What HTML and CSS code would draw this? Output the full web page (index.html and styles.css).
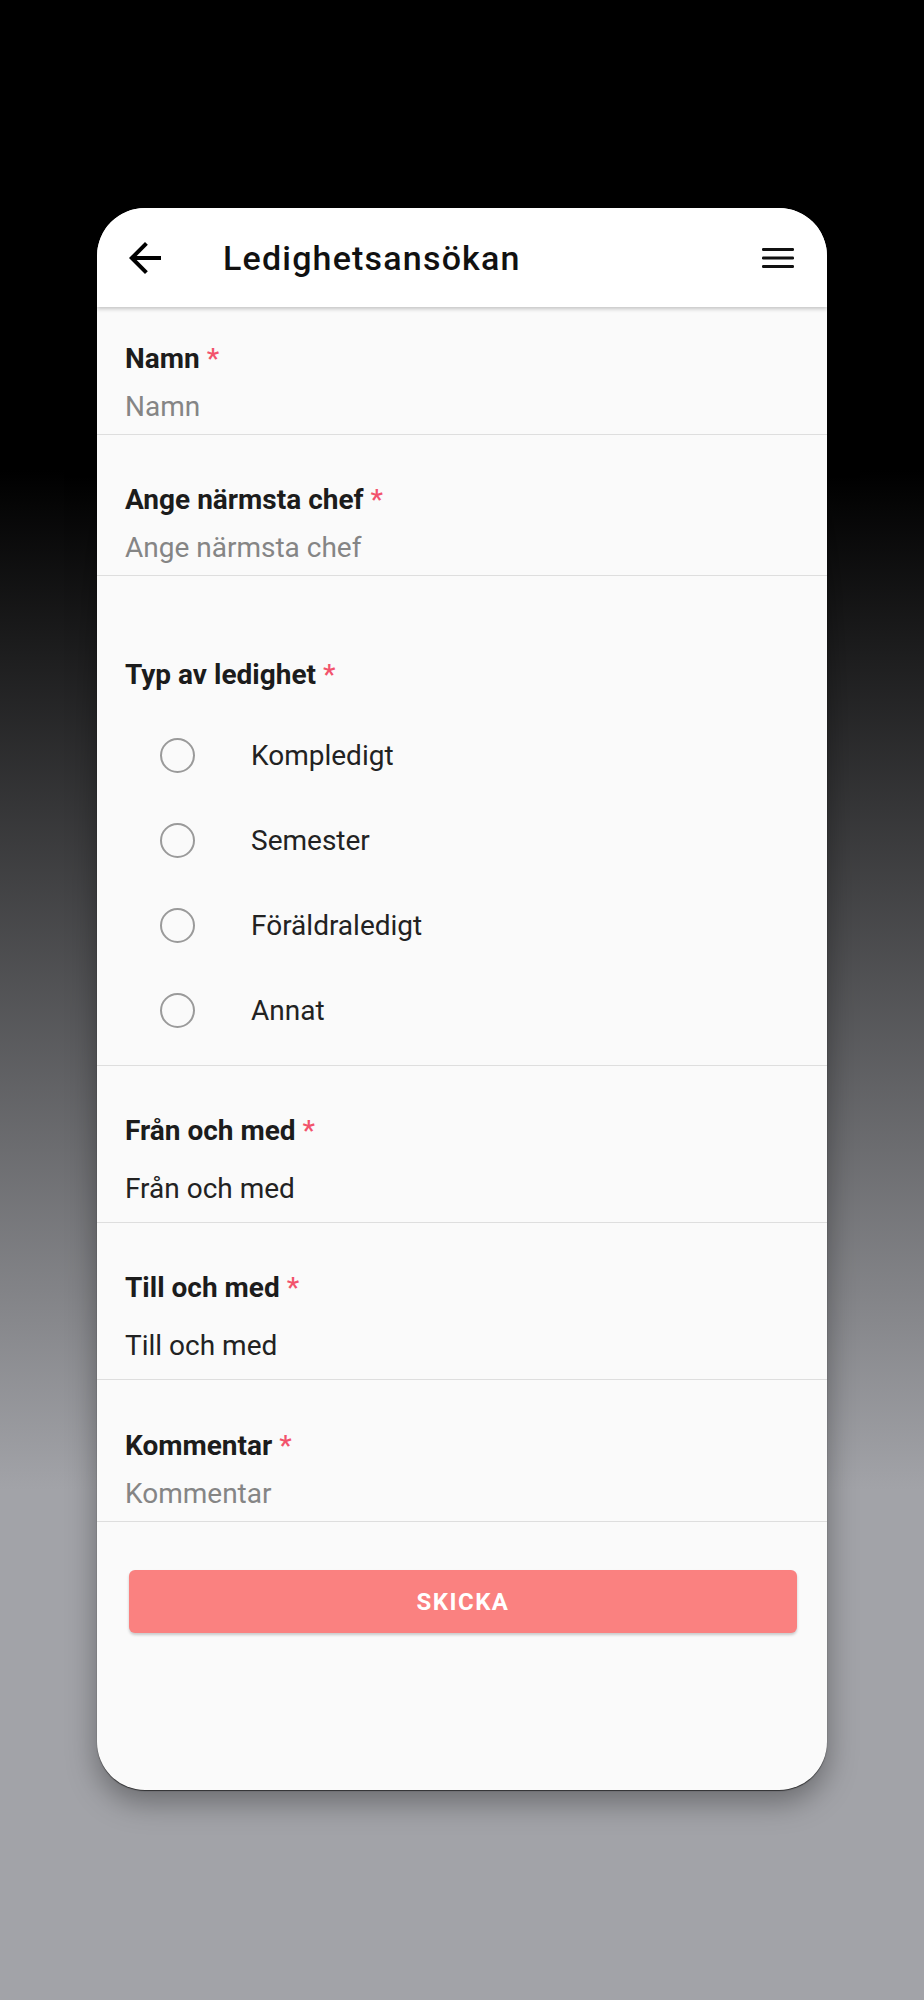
FILE: index.html
```html
<!DOCTYPE html>
<html lang="sv">
<head>
<meta charset="utf-8">
<title>Ledighetsansökan</title>
<link rel="stylesheet" href="styles.css">
</head>
<body>
<div class="stage">
  <div class="phone">
    <header class="appbar">
      <button class="icon-btn back" aria-label="Tillbaka">
        <svg width="48" height="48" viewBox="0 0 24 24"><path d="M20 11H7.83l5.59-5.59L12 4l-8 8 8 8 1.41-1.41L7.83 13H20v-2z" fill="#000"/></svg>
      </button>
      <h1 class="title">Ledighetsansökan</h1>
      <button class="icon-btn menu" aria-label="Meny">
        <svg width="32" height="24" viewBox="0 0 32 24"><rect x="0" y="2" width="32" height="3" rx="1.2" fill="#111"/><rect x="0" y="10.5" width="32" height="3" rx="1.2" fill="#111"/><rect x="0" y="19" width="32" height="3" rx="1.2" fill="#111"/></svg>
      </button>
    </header>
    <main class="form">
      <div class="field field-first">
        <div class="label">Namn <span class="req">*</span></div>
        <div class="input placeholder">Namn</div>
      </div>
      <div class="field">
        <div class="label">Ange närmsta chef <span class="req">*</span></div>
        <div class="input placeholder">Ange närmsta chef</div>
      </div>
      <div class="field field-radio">
        <div class="label">Typ av ledighet <span class="req">*</span></div>
        <div class="radios">
          <div class="radio"><span class="circle"></span><span class="radio-text">Kompledigt</span></div>
          <div class="radio"><span class="circle"></span><span class="radio-text">Semester</span></div>
          <div class="radio"><span class="circle"></span><span class="radio-text">Föräldraledigt</span></div>
          <div class="radio"><span class="circle"></span><span class="radio-text">Annat</span></div>
        </div>
      </div>
      <div class="field field-date">
        <div class="label">Från och med <span class="req">*</span></div>
        <div class="input value">Från och med</div>
      </div>
      <div class="field field-date">
        <div class="label">Till och med <span class="req">*</span></div>
        <div class="input value">Till och med</div>
      </div>
      <div class="field field-last">
        <div class="label">Kommentar <span class="req">*</span></div>
        <div class="input placeholder">Kommentar</div>
      </div>
      <div class="actions">
        <button class="submit">SKICKA</button>
      </div>
    </main>
  </div>
</div>
</body>
</html>
```
FILE: styles.css
```css
html, body {
  margin: 0;
  padding: 0;
}
body {
  min-height: 2000px;
  background: linear-gradient(to bottom, #000 0px, #000 470px, #a2a3a8 1490px, #a2a3a8 2000px);
  font-family: Roboto, "Liberation Sans", sans-serif;
}
.stage {
  display: flex;
  justify-content: center;
  padding-top: 208px;
}
.phone {
  width: 730px;
  height: 1582px;
  background: #fafafa;
  border-radius: 48px;
  overflow: hidden;
  display: flex;
  flex-direction: column;
  box-shadow: 0 1px 1px rgba(0,0,0,0.6), 0 12px 30px rgba(0,0,0,0.35);
}
.appbar {
  height: 99px;
  flex: none;
  background: #fff;
  display: flex;
  align-items: center;
  padding: 0 33px 0 24px;
  box-shadow: 0 2px 4px rgba(0,0,0,0.22);
  position: relative;
  z-index: 1;
}
.icon-btn {
  background: none;
  border: 0;
  padding: 0;
  margin: 0;
  display: flex;
  align-items: center;
  justify-content: center;
}
.back {
  width: 48px;
  height: 48px;
}
.title {
  margin: 0 0 0 54px;
  flex: 1;
  font-size: 34px;
  font-weight: 500;
  letter-spacing: 0.035em;
  color: #111;
  line-height: 40px;
}
.menu svg {
  display: block;
}
.form {
  flex: 1;
  display: flex;
  flex-direction: column;
}
.field {
  padding: 47px 28px 9px;
  border-bottom: 1px solid #dedede;
  display: flex;
  flex-direction: column;
  gap: 12px;
}
.field-first {
  padding-top: 34px;
}
.field-date {
  gap: 22px;
  padding-bottom: 15px;
}
.field-last {
  padding-top: 48px;
}
.field-radio {
  padding-top: 81px;
  padding-bottom: 12px;
  gap: 20px;
}
.label {
  font-size: 28px;
  line-height: 36px;
  font-weight: 700;
  color: #1c1c1c;
}
.req {
  color: #f2536c;
  font-weight: 500;
}
.input {
  font-size: 28px;
  line-height: 36px;
}
.placeholder {
  color: #858585;
}
.value {
  color: #222;
}
.radios {
  display: flex;
  flex-direction: column;
  padding-left: 35px;
}
.radio {
  height: 85px;
  display: flex;
  align-items: center;
}
.circle {
  width: 31px;
  height: 31px;
  border: 2.5px solid #9a9a9a;
  border-radius: 50%;
  flex: none;
}
.radio-text {
  margin-left: 56px;
  font-size: 28px;
  color: #222;
}
.actions {
  padding: 48px 30px 0 32px;
}
.submit {
  width: 100%;
  height: 63px;
  border: 0;
  border-radius: 6px;
  background: #fa8180;
  color: #fff;
  font-family: Roboto, "Liberation Sans", sans-serif;
  font-size: 24px;
  font-weight: 700;
  letter-spacing: 0.06em;
  box-shadow: 0 2px 3px rgba(0,0,0,0.2);
}
```
